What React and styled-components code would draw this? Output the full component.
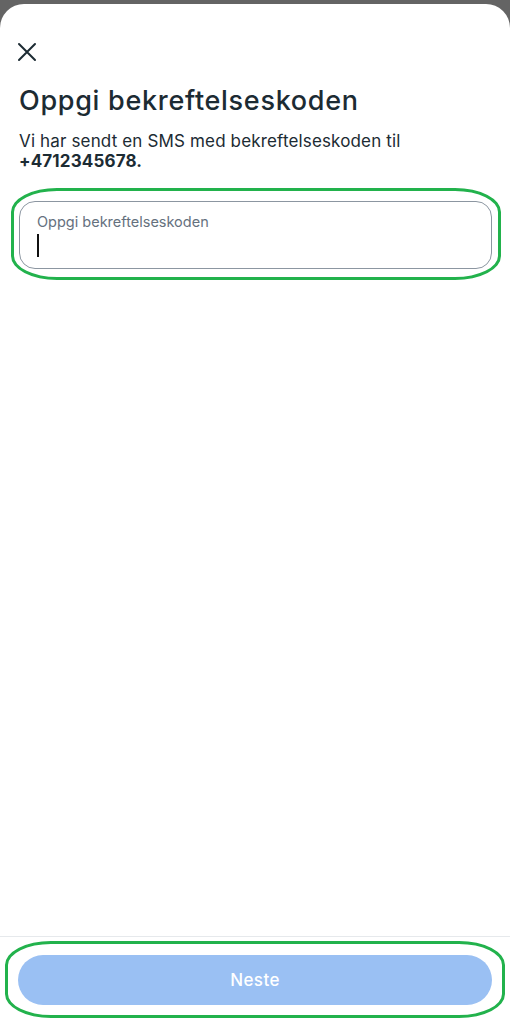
import React from 'react';
import styled, { createGlobalStyle } from 'styled-components';

const Global = createGlobalStyle`
  html, body {
    margin: 0;
    padding: 0;
    background: #646464;
  }
  body {
    font-family: Inter, "Noto Sans", sans-serif;
    color: #1c2b33;
  }
`;

const Sheet = styled.div`
  margin-top: 4px;
  height: 1020px;
  background: #fff;
  border-radius: 24px 24px 0 0;
  display: flex;
  flex-direction: column;
  overflow: hidden;
`;

const Header = styled.div`
  padding: 35px 0 0 14px;
  height: 31px;
`;

const CloseButton = styled.button`
  width: 26px;
  height: 26px;
  padding: 0;
  border: none;
  background: none;
  display: flex;
  align-items: center;
  justify-content: center;
  cursor: pointer;
`;

const Content = styled.div`
  flex: 1;
  padding: 14px 18px 0 19px;
`;

const Title = styled.h1`
  margin: 0;
  font-size: 27px;
  line-height: 34px;
  font-weight: 500;
  letter-spacing: 0.7px;
`;

const Subtitle = styled.p`
  margin: 13px 0 0;
  font-size: 17px;
  line-height: 20px;
  font-weight: 400;
  letter-spacing: 0.15px;

  strong {
    font-weight: 700;
  }
`;

const Annotated = styled.div`
  position: relative;
  margin-top: ${p => p.$top || 0}px;

  &::after {
    content: '';
    position: absolute;
    top: ${p => p.$t}px;
    bottom: ${p => p.$b}px;
    left: ${p => p.$l}px;
    right: ${p => p.$r}px;
    border: 3px solid #22b24c;
    border-radius: 46px / 24px;
    pointer-events: none;
  }
`;

const Field = styled.label`
  display: block;
  height: 68px;
  box-sizing: border-box;
  border: 1px solid #8c96a1;
  border-radius: 16px;
  padding: 11px 17px 0;
`;

const FieldLabel = styled.div`
  font-size: 14.5px;
  line-height: 18px;
  color: #65717e;
`;

const Caret = styled.div`
  margin-top: 3px;
  width: 2px;
  height: 23px;
  background: #111;
`;

const Footer = styled.div`
  box-sizing: border-box;
  border-top: 1px solid #e6e9ec;
  padding: 18px 18px 0;
  height: 88px;
`;

const Button = styled.button`
  width: 100%;
  height: 50px;
  border: none;
  border-radius: 25px;
  background: #9ac0f3;
  color: #fff;
  font-family: Inter, "Noto Sans", sans-serif;
  font-size: 17px;
  font-weight: 500;
  letter-spacing: 0.4px;
`;

const CloseIcon = () => (
  <svg width="20" height="20" viewBox="0 0 20 20">
    <path d="M2 2 L18 18 M18 2 L2 18" stroke="#1c2b33" strokeWidth="2" strokeLinecap="round" fill="none" />
  </svg>
);

export default function App() {
  return (
    <>
      <Global />
      <Sheet>
        <Header>
          <CloseButton aria-label="Lukk">
            <CloseIcon />
          </CloseButton>
        </Header>
        <Content>
          <Title>Oppgi bekreftelseskoden</Title>
          <Subtitle>
            Vi har sendt en SMS med bekreftelseskoden til
            <br />
            <strong>+4712345678.</strong>
          </Subtitle>
          <Annotated $top={30} $t={-13} $b={-11} $l={-8} $r={-9}>
            <Field>
              <FieldLabel>Oppgi bekreftelseskoden</FieldLabel>
              <Caret />
            </Field>
          </Annotated>
        </Content>
        <Footer>
          <Annotated $t={-14} $b={-13} $l={-13} $r={-13}>
            <Button>Neste</Button>
          </Annotated>
        </Footer>
      </Sheet>
    </>
  );
}
